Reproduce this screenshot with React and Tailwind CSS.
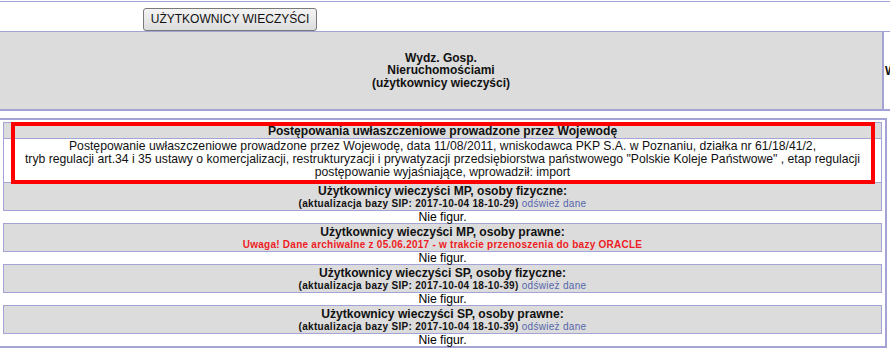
import React from "react";

const rows = [
  { title: "Użytkownicy wieczyści MP, osoby fizyczne:", date: "2017-10-04 18-10-29" },
  { title: "Użytkownicy wieczyści MP, osoby prawne:", warning: "Uwaga! Dane archiwalne z 05.06.2017 - w trakcie przenoszenia do bazy ORACLE" },
  { title: "Użytkownicy wieczyści SP, osoby fizyczne:", date: "2017-10-04 18-10-39" },
  { title: "Użytkownicy wieczyści SP, osoby prawne:", date: "2017-10-04 18-10-39" },
];

function Section({ row }) {
  return (
    <>
      <div className="border border-[#a3a3d6] bg-[#dcdcdc] text-center h-[29px] pt-px">
        <div className="text-[12.1px] leading-[14px] font-bold text-[#111]">{row.title}</div>
        {row.warning ? (
          <div className="text-[10px] leading-[12px] font-bold tracking-[0.25px] text-[#ee1c24]">{row.warning}</div>
        ) : (
          <div className="text-[10px] leading-[12px] tracking-[0.3px]">
            <span className="font-bold text-[#111]">(aktualizacja bazy SIP: {row.date})</span>{" "}
            <span className="text-[#5566aa]">odśwież dane</span>
          </div>
        )}
      </div>
      <div className="text-center text-[12.2px] leading-[12px] h-[12px]">Nie figur.</div>
    </>
  );
}

export default function App() {
  return (
    <div className="relative w-[890px] h-[350px] overflow-hidden bg-white text-black font-['Liberation_Sans',Arial,sans-serif]">
      <div className="mt-px border-t border-[#a3a3d6]" />
      <div className="h-[29px] pl-[143px] pt-[4px]">
        <button className="h-[23px] w-[174px] rounded-[3px] border border-[#7a7a7a] bg-gradient-to-b from-[#f4f4f4] to-[#dddddd] text-[12px] text-[#111] font-['Liberation_Sans',Arial,sans-serif]">
          UŻYTKOWNICY WIECZYŚCI
        </button>
      </div>

      <div className="flex border-t border-b-2 border-[#a3a3d6] h-[80px]">
        <div className="w-[884px] shrink-0 bg-[#dcdcdc] border-r-2 border-[#a3a3d6] flex items-center justify-center">
          <div className="text-center text-[12px] leading-[12.5px] font-bold text-[#111]">
            Wydz. Gosp.<br />Nieruchomościami<br />(użytkownicy wieczyści)
          </div>
        </div>
        <div className="flex items-center overflow-hidden whitespace-nowrap pl-px text-[12px] font-bold text-[#111]">
          Wydz.
        </div>
      </div>

      <div className="mt-[7px] mr-[3px] border-t-2 border-r-2 border-b-2 border-[#a3a3d6] pl-[3px] pr-[3px] pt-[2px]">
        <div className="border border-[#a3a3d6]">
          <div className="bg-[#dcdcdc] h-[16px] text-center text-[12.1px] leading-[16px] font-bold text-[#111] border-b border-[#a3a3d6]">
            Postępowania uwłaszczeniowe prowadzone przez Wojewodę
          </div>
          <div className="h-[43px] pt-px text-center text-[12.2px] leading-[13px] text-[#111] whitespace-nowrap">
            Postępowanie uwłaszczeniowe prowadzone przez Wojewodę, data 11/08/2011, wniskodawca PKP S.A. w Poznaniu, działka nr 61/18/41/2,
            <br />
            tryb regulacji art.34 i 35 ustawy o komercjalizacji, restrukturyzacji i prywatyzacji przedsiębiorstwa państwowego "Polskie Koleje Państwowe" , etap regulacji
            <br />
            postępowanie wyjaśniające, wprowadził: import
          </div>
        </div>
        <div className="-mt-px">
          {rows.map((row, i) => (
            <Section key={i} row={row} />
          ))}
        </div>
      </div>

      {/* red annotation frame */}
      <div className="absolute left-[11px] top-[122px] w-[864px] h-[62px] border-4 border-[#ff0000]" />
    </div>
  );
}
